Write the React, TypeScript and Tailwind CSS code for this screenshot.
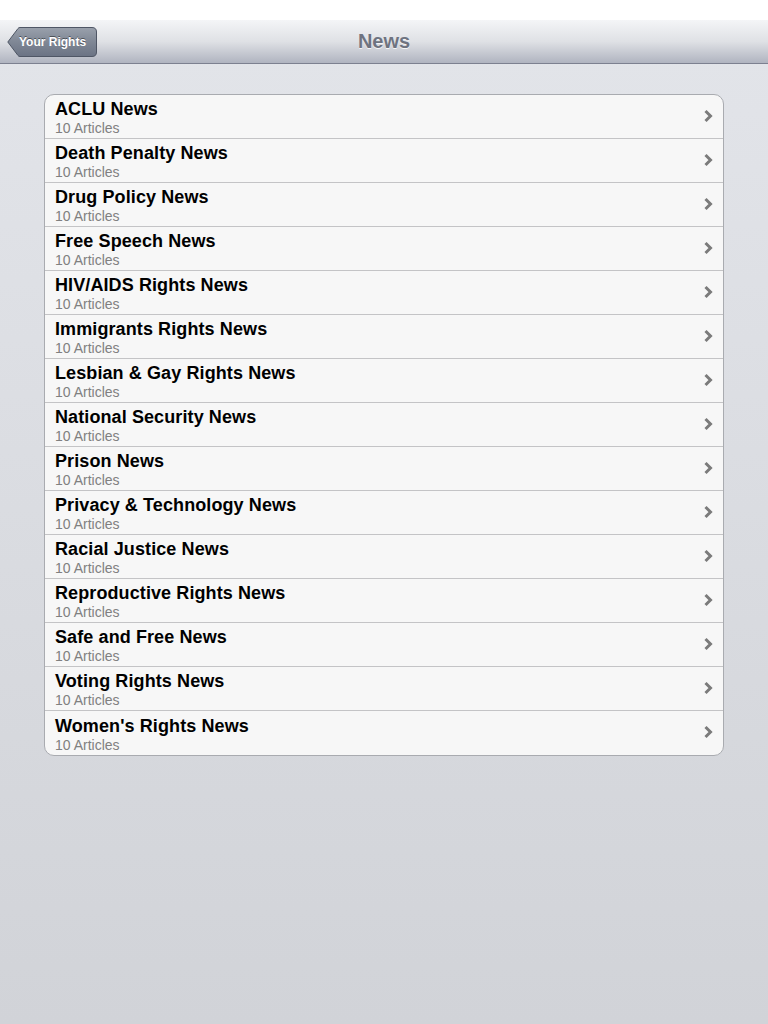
import React from "react";

const items = [
  "ACLU News",
  "Death Penalty News",
  "Drug Policy News",
  "Free Speech News",
  "HIV/AIDS Rights News",
  "Immigrants Rights News",
  "Lesbian & Gay Rights News",
  "National Security News",
  "Prison News",
  "Privacy & Technology News",
  "Racial Justice News",
  "Reproductive Rights News",
  "Safe and Free News",
  "Voting Rights News",
  "Women's Rights News",
];

function Chevron() {
  return (
    <svg width="10" height="14" viewBox="0 0 10 14" className="shrink-0 mt-[-2px]">
      <path d="M2.5 2 L7.5 7 L2.5 12" fill="none" stroke="#7b7b7b" strokeWidth="3" strokeLinecap="butt" strokeLinejoin="miter" />
    </svg>
  );
}

function BackButton() {
  return (
    <div className="relative w-[90px] h-[30px]">
      <svg width="90" height="30" viewBox="0 0 90 30" className="absolute inset-0">
        <defs>
          <linearGradient id="bb" x1="0" y1="0" x2="0" y2="1">
            <stop offset="0" stopColor="#9aa1ac" />
            <stop offset="0.5" stopColor="#7f8795" />
            <stop offset="1" stopColor="#6b7384" />
          </linearGradient>
        </defs>
        <path
          d="M0.8 15 L11 1.5 Q11.6 0.5 13 0.5 L85 0.5 Q89.5 0.5 89.5 5 L89.5 25 Q89.5 29.5 85 29.5 L13 29.5 Q11.6 29.5 11 28.5 Z"
          fill="url(#bb)"
          stroke="#4f5665"
          strokeWidth="1"
        />
      </svg>
      <span
        className="relative flex h-full items-center pl-[12px] text-[12px] font-bold text-white"
        style={{ textShadow: "0 -1px 0 rgba(0,0,0,0.45)" }}
      >
        Your Rights
      </span>
    </div>
  );
}

export default function App() {
  return (
    <div
      className="w-[768px] h-[1024px] flex flex-col bg-gradient-to-b from-[#e3e5ea] to-[#d1d3d8]"
      style={{ fontFamily: '"Liberation Sans", Arial, sans-serif' }}
    >
      <div className="h-[20px] bg-white shrink-0" />
      <div className="relative h-[44px] shrink-0 flex items-center px-[7px] bg-gradient-to-b from-[#f4f5f7] via-[#dfe1e5] to-[#b0b4c0] border-b border-[#7c8090]">
        <BackButton />
        <div
          className="absolute left-0 right-0 top-0 h-[41px] flex items-center justify-center text-[20px] font-bold text-[#6e7380] pointer-events-none"
          style={{ textShadow: "0 1px 0 rgba(255,255,255,0.8)" }}
        >
          News
        </div>
      </div>
      <div className="px-[44px] pt-[30px]">
        <div className="rounded-[10px] border border-[#a9abb0] bg-[#f7f7f7] overflow-hidden">
          {items.map((t, i) => (
            <div
              key={t}
              className={
                "h-[44px] flex items-center pl-[10px] pr-[10px] " +
                (i < items.length - 1 ? "border-b border-[#c4c4c6]" : "")
              }
            >
              <div className="flex-1 flex flex-col mt-[1px]">
                <div className="text-[18px] font-bold text-black leading-[22px] tracking-[0.1px]">{t}</div>
                <div className="text-[14px] text-[#808080] leading-[16px]">10 Articles</div>
              </div>
              <Chevron />
            </div>
          ))}
        </div>
      </div>
    </div>
  );
}
